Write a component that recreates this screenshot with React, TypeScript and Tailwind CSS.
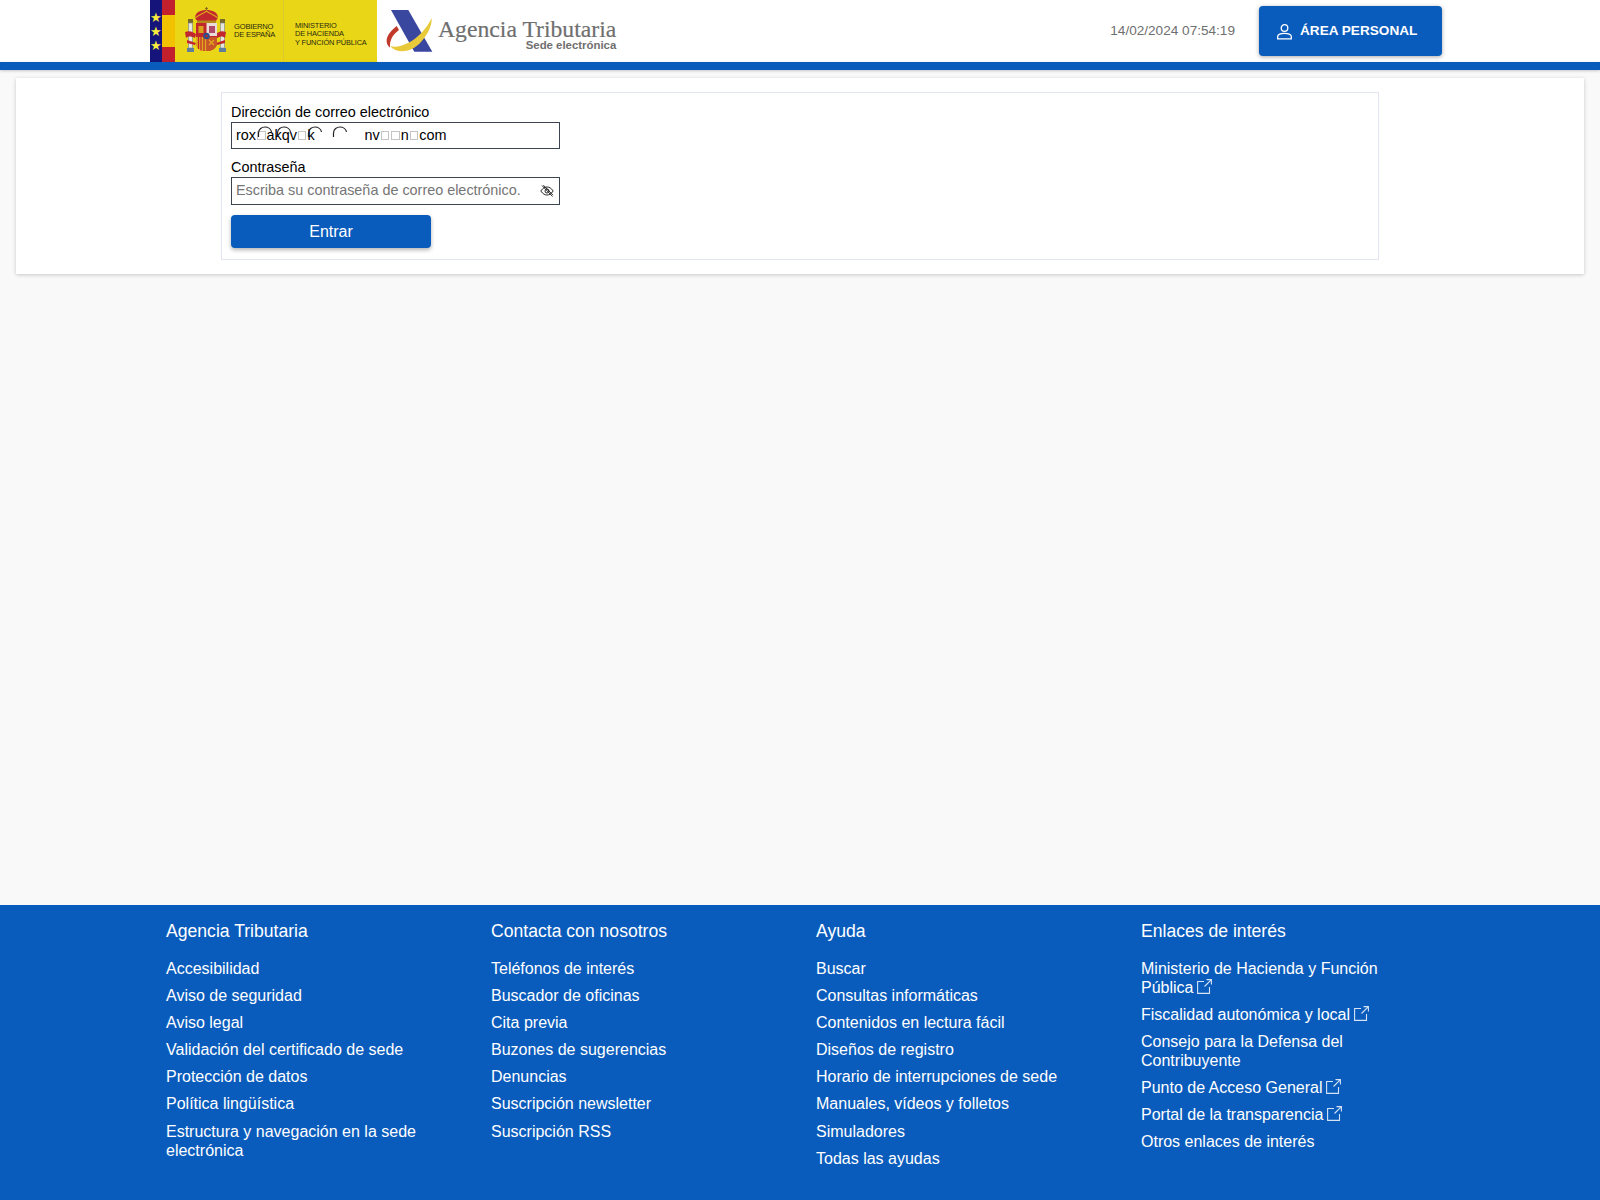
import React from 'react';

const BLUE = 'bg-[#0a5cbc]';

const footerColumns: { title: string; links: { text: string; external?: boolean }[] }[] = [
  {
    title: 'Agencia Tributaria',
    links: [
      { text: 'Accesibilidad' },
      { text: 'Aviso de seguridad' },
      { text: 'Aviso legal' },
      { text: 'Validación del certificado de sede' },
      { text: 'Protección de datos' },
      { text: 'Política lingüística' },
      { text: 'Estructura y navegación en la sede electrónica' },
    ],
  },
  {
    title: 'Contacta con nosotros',
    links: [
      { text: 'Teléfonos de interés' },
      { text: 'Buscador de oficinas' },
      { text: 'Cita previa' },
      { text: 'Buzones de sugerencias' },
      { text: 'Denuncias' },
      { text: 'Suscripción newsletter' },
      { text: 'Suscripción RSS' },
    ],
  },
  {
    title: 'Ayuda',
    links: [
      { text: 'Buscar' },
      { text: 'Consultas informáticas' },
      { text: 'Contenidos en lectura fácil' },
      { text: 'Diseños de registro' },
      { text: 'Horario de interrupciones de sede' },
      { text: 'Manuales, vídeos y folletos' },
      { text: 'Simuladores' },
      { text: 'Todas las ayudas' },
    ],
  },
  {
    title: 'Enlaces de interés',
    links: [
      { text: 'Ministerio de Hacienda y Función Pública', external: true },
      { text: 'Fiscalidad autonómica y local', external: true },
      { text: 'Consejo para la Defensa del Contribuyente' },
      { text: 'Punto de Acceso General', external: true },
      { text: 'Portal de la transparencia', external: true },
      { text: 'Otros enlaces de interés' },
    ],
  },
];

const Crest = () => (
  <svg width="44" height="46" viewBox="0 0 44 46" className="mt-[-3px] shrink-0">
    {/* columns */}
    <rect x="6" y="12" width="5" height="4" fill="#7a6a2a" />
    <rect x="38" y="12" width="5" height="4" fill="#7a6a2a" />
    <rect x="6.5" y="16" width="4" height="25" fill="#e6e6e0" stroke="#77808c" strokeWidth="0.6" />
    <rect x="38.5" y="16" width="4" height="25" fill="#e6e6e0" stroke="#77808c" strokeWidth="0.6" />
    <rect x="5" y="41" width="7" height="4" fill="#5f7d9c" />
    <rect x="37" y="41" width="7" height="4" fill="#5f7d9c" />
    {/* ribbons */}
    <path d="M3 25 C8 23 11 25 14 27 L13 31 C9 29 6 29 4 31 Z" fill="#c1272d" />
    <path d="M44 25 C39 23 36 25 34 27 L35 31 C38 29 41 29 43 31 Z" fill="#c1272d" />
    <path d="M5 33 L14 36 L13 38 L5 36 Z" fill="#c1272d" />
    <path d="M43 33 L34 36 L35 38 L43 36 Z" fill="#c1272d" />
    {/* crown */}
    <path d="M13 11 C13 5 19 3 24.5 3 C30 3 36 5 36 11 L33 15 H16 Z" fill="#c1272d" />
    <path d="M24.5 0 V4 M23 1.5 H26" stroke="#8a6d1d" strokeWidth="1.2" />
    <path d="M13 11 C18 7 21 7 24.5 4 C28 7 31 7 36 11" stroke="#d9a21b" strokeWidth="1.3" fill="none" />
    <rect x="15" y="13.5" width="19" height="2.5" fill="#b58a1c" />
    {/* shield */}
    <path d="M14 16 H35 V36 C35 41 30 44 24.5 44 C19 44 14 41 14 36 Z" fill="#c1272d" />
    <rect x="24.5" y="16" width="10.5" height="13" fill="#e9dcd8" />
    <path d="M27 19 H33 V26 H27 Z" fill="#b0486a" />
    <path d="M14 30 H24.5 V44 C19 44 14 41 14 36 Z" fill="#e0a81c" />
    <path d="M16.5 30 V42 M19 30 V43.5 M22 30 V44" stroke="#c1272d" strokeWidth="1.2" />
    <path d="M24.5 30 H35 V36 C35 41 30 44 24.5 44 Z" fill="#c8552a" />
    <path d="M27 33 L32 38 M32 33 L27 38" stroke="#e0a81c" strokeWidth="1.2" />
    <rect x="16.5" y="19" width="5" height="7" fill="#d9a21b" />
    <circle cx="24.5" cy="29" r="3.2" fill="#27508f" />
    <circle cx="24.5" cy="29" r="1.2" fill="#c1272d" />
  </svg>
);

const Star = () => <span className="text-[13px] leading-[13px] text-[#fbec3c]">★</span>;

const SpainLogo = () => (
  <div className="flex h-[62px] w-[227px] shrink-0 bg-[#e9d616]">
    <div className="flex w-[12px] flex-col items-center justify-center gap-[1px] bg-[#14147a]">
      <Star />
      <Star />
      <Star />
    </div>
    <div className="flex w-[13px] flex-col">
      <div className="h-[15px] bg-[#c1202c]" />
      <div className="flex-1 bg-[#f2c200]" />
      <div className="h-[15px] bg-[#c1202c]" />
    </div>
    <div className="flex w-[109px] items-center border-r border-[#dccb2a] pl-[7px]">
      <Crest />
      <div className="ml-[8px] text-[7.6px] leading-[8px] tracking-[-0.2px] text-[#2b2a12]">
        <div>GOBIERNO</div>
        <div>DE ESPAÑA</div>
      </div>
    </div>
    <div className="flex flex-1 flex-col justify-center pl-[11px] pt-[7px] text-[7.4px] leading-[8.3px] tracking-[-0.15px] text-[#2b2a12]">
      <div>MINISTERIO</div>
      <div>DE HACIENDA</div>
      <div>Y FUNCIÓN PÚBLICA</div>
    </div>
  </div>
);

const AeatLogo = () => (
  <div className="ml-[8px] flex h-[62px] items-center">
    <svg width="50" height="46" viewBox="0 0 50 46" className="mt-[-1px] shrink-0">
      <polygon points="6,2 23.3,2 47.3,43.7 29.3,43.7" fill="#3a479f" />
      <path d="M11.7 18 C5 23 1 29 1.7 34 C2 37 4 39 5 39.5 C4.5 33 7 27 14 22 Z" fill="#c0392b" />
      <path d="M5 38 C12 46 26 45 36 34 C43 26 47 18 46.7 10 C42 20 33 30 23 35 C16 38.5 10 39.5 5 38 Z" fill="#e8c93a" />
    </svg>
    <div className="ml-[3px] mt-[5px] flex flex-col items-end text-[#6f6f6f]">
      <div className="font-['Liberation_Serif',serif] text-[23.7px] leading-[24px] [-webkit-text-stroke:0.2px_#6f6f6f]">Agencia Tributaria</div>
      <div className="mt-[-1px] text-[11.4px] font-bold leading-[11px]">Sede electrónica</div>
    </div>
  </div>
);

const UserIcon = () => (
  <svg width="17" height="17" viewBox="0 0 17 17" fill="none" stroke="white" strokeWidth="1.3">
    <circle cx="8.5" cy="5" r="3.3" />
    <path d="M1.7 15.8 V13.6 C1.7 11.4 5 10.4 8.5 10.4 C12 10.4 15.3 11.4 15.3 13.6 V15.8 Z" />
  </svg>
);

const EyeOffIcon = () => (
  <svg width="14" height="14" viewBox="0 0 14 14" fill="none" stroke="#2a2a2a" strokeWidth="1">
    <path d="M0.8 7 C3 3.8 5 3 7 3 C9 3 11 3.8 13.2 7 C11 10.2 9 11 7 11 C5 11 3 10.2 0.8 7 Z" />
    <circle cx="7" cy="7" r="2" />
    <path d="M2 1.5 L12.5 12.5 M3.4 1.2 L13 11.2" />
  </svg>
);

const ExternalIcon = () => (
  <svg width="15" height="15" viewBox="0 0 15 15" fill="none" stroke="#d5e3f5" strokeWidth="1.1" className="ml-[4px] mt-[1px] inline-block align-[-1px]">
    <path d="M7 2.5 H0.6 V14.4 H12.5 V8" />
    <path d="M7.5 7.5 L14.4 0.6 M9.5 0.6 H14.4 V5.5" />
  </svg>
);

const Tofu = () => <span className="mx-[1px] inline-block h-[8.5px] w-[8.5px] border border-[#c4c4c4]" />;

const Arc = ({ className }: { className: string }) => (
  <svg width="16" height="12" viewBox="0 0 16 12" fill="none" stroke="#222" strokeWidth="1.2" className={`absolute top-[3px] ${className}`}>
    <path d="M1.5 11 V7 C1.5 3 5 1 8 1 C11 1 14 3 14.5 6" />
  </svg>
);

const Field = ({ label, children, className }: { label: string; children: React.ReactNode; className?: string }) => (
  <div className={className}>
    <div className="text-[14.4px] leading-[16px] text-black">{label}</div>
    {children}
  </div>
);

export default function App() {
  return (
    <div className="flex min-h-screen flex-col bg-[#f9f9f9] font-['Liberation_Sans',Arial,sans-serif]">
      <header className="bg-white">
        <div className="mx-auto flex h-[62px] w-[1300px] items-center">
          <SpainLogo />
          <AeatLogo />
          <div className="ml-auto text-[13.6px] text-[#6f6f6f]">14/02/2024 07:54:19</div>
          <button className="ml-[24px] mr-[8px] flex h-[50px] w-[183px] items-center rounded-[4px] bg-[#0a5cbc] pl-[17px] text-[13.6px] font-bold text-white shadow-[0_1px_4px_rgba(0,0,0,0.35)]">
            <UserIcon />
            <span className="ml-[7px]">ÁREA PERSONAL</span>
          </button>
        </div>
      </header>
      <div className={`h-[8px] ${BLUE} shadow-[0_1px_3px_rgba(0,0,0,0.2)]`} />

      <main className="flex-1 px-[16px] pt-[8px]">
        <div className="h-[196px] w-[1568px] bg-white px-[205px] pt-[14px] shadow-[0_1px_4px_rgba(0,0,0,0.2)]">
          <div className="h-[168px] w-[1158px] border border-[#e2e6f0] px-[9px] pt-[11px]">
            <Field label="Dirección de correo electrónico">
              <div className="relative mt-[2px] flex h-[27px] w-[329px] items-center border border-[#3c4450] pl-[4px] text-[14.4px] text-black">
                rox
                <Tofu />
                akqv
                <Tofu />k<span className="ml-[50px]">nv</span>
                <Tofu />
                <Tofu />n
                <Tofu />
                com
                <Arc className="left-[25px]" />
                <Arc className="left-[44px]" />
                <Arc className="left-[75px]" />
                <Arc className="left-[100px]" />
              </div>
            </Field>
            <Field label="Contraseña" className="mt-[10px]">
              <div className="mt-[2px] flex h-[28px] w-[329px] items-center justify-between border border-[#3c4450] pl-[4px] pr-[5px] text-[14.4px] text-[#757575]">
                <span className="mt-[-1px]">Escriba su contraseña de correo electrónico.</span>
                <EyeOffIcon />
              </div>
            </Field>
            <button className="mt-[10px] h-[33px] w-[200px] rounded-[4px] bg-[#0a5cbc] text-[16px] text-white shadow-[0_2px_4px_rgba(0,0,0,0.3)]">
              Entrar
            </button>
          </div>
        </div>
      </main>

      <footer className={`h-[295px] ${BLUE} text-white`}>
        <div className="ml-[166px] grid w-[1300px] grid-cols-4 pt-[16px]">
          {footerColumns.map((col) => (
            <div key={col.title} className="w-[280px]">
              <h3 className="text-[17.6px] font-normal leading-[20px]">{col.title}</h3>
              <ul className="mt-[18px] flex flex-col gap-[8.1px] text-[16px] leading-[19px]">
                {col.links.map((link) => (
                  <li key={link.text}>
                    {link.text}
                    {link.external && <ExternalIcon />}
                  </li>
                ))}
              </ul>
            </div>
          ))}
        </div>
      </footer>
    </div>
  );
}
